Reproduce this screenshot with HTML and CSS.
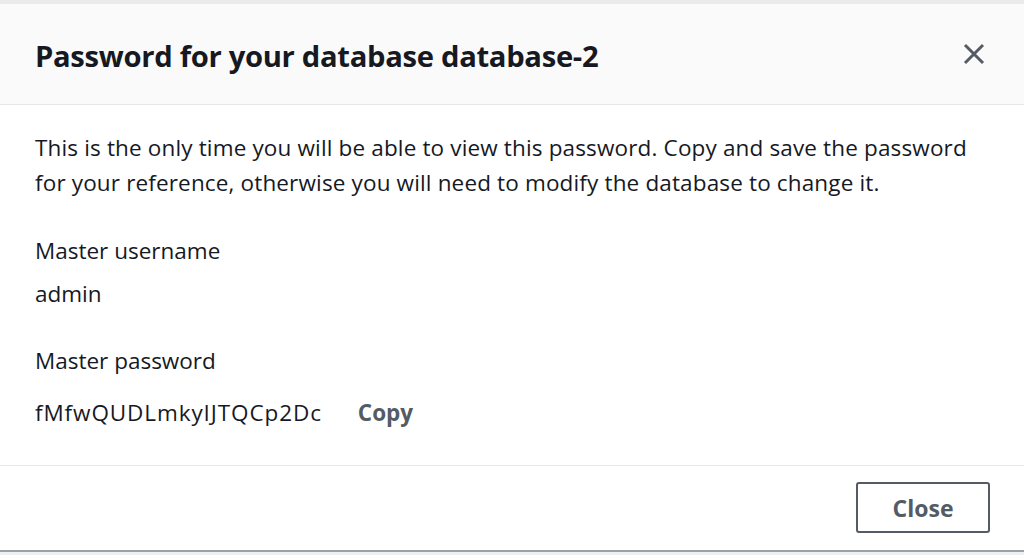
FILE: index.html
```html
<!DOCTYPE html>
<html lang="en">
<head>
<meta charset="utf-8">
<title>Password for your database</title>
<link rel="stylesheet" href="styles.css">
</head>
<body>
<div class="modal">
  <div class="modal-header">
    <h2 class="title">Password for your database database-2</h2>
    <button class="dismiss" aria-label="Close">
      <svg width="24" height="24" viewBox="0 0 24 24"><path d="M3 3 L21 21 M21 3 L3 21" stroke="#545b64" stroke-width="3" fill="none"/></svg>
    </button>
  </div>
  <div class="modal-body">
    <p class="intro">This is the only time you will be able to view this password. Copy and save the password for your reference, otherwise you will need to modify the database to change it.</p>
    <div class="field">
      <div class="label">Master username</div>
      <div class="value">admin</div>
    </div>
    <div class="field">
      <div class="label">Master password</div>
      <div class="value row"><span>fMfwQUDLmkyIJTQCp2Dc</span><span class="copy">Copy</span></div>
    </div>
  </div>
  <div class="modal-footer">
    <button class="btn">Close</button>
  </div>
</div>
</body>
</html>
```
FILE: styles.css
```css
* { box-sizing: border-box; }
html, body { margin: 0; padding: 0; }
body {
  width: 1024px;
  height: 555px;
  overflow: hidden;
  background: #eef0f1;
  font-family: "Open Sans", "Noto Sans", sans-serif;
  color: #16191f;
}
.modal {
  display: flex;
  flex-direction: column;
  height: 552px;
  background: #fff;
  border-top: 4px solid #e9ebed;
  border-bottom: 2px solid #9aa1a7;
}
.modal-header {
  height: 101px;
  background: #fafafa;
  border-bottom: 1px solid #e4e6e8;
  display: flex;
  align-items: center;
  justify-content: space-between;
  padding: 0 38px 0 35px;
}
.title {
  margin: 3px 0 0;
  font-size: 29.2px;
  font-weight: 700;
  letter-spacing: -0.3px;
  color: #16191f;
}
.dismiss {
  background: none;
  border: 0;
  padding: 0;
  width: 24px;
  height: 24px;
  display: flex;
}
.modal-body {
  padding: 25px 35px 0;
  height: 361px;
  border-bottom: 1px solid #e4e6e8;
}
.intro {
  margin: 0 0 33px;
  font-size: 22.5px;
  line-height: 35px;
  letter-spacing: 0.15px;
}
.field { margin-bottom: 32px; }
.label, .value {
  font-size: 22.5px;
  line-height: 35px;
}
.value { margin-top: 8px; }
.row { display: flex; gap: 36px; margin-top: 17px; }
.row span:first-child { letter-spacing: 0.9px; }
.copy { font-weight: 700; color: #545b64; }
.modal-footer {
  flex: 1;
  display: flex;
  justify-content: flex-end;
  align-items: flex-start;
  padding: 16px 34px 0;
}
.btn {
  width: 134px;
  height: 51px;
  border: 2px solid #545b64;
  border-radius: 3px;
  background: #fff;
  color: #545b64;
  font-family: inherit;
  font-size: 23px;
  font-weight: 700;
}
```
